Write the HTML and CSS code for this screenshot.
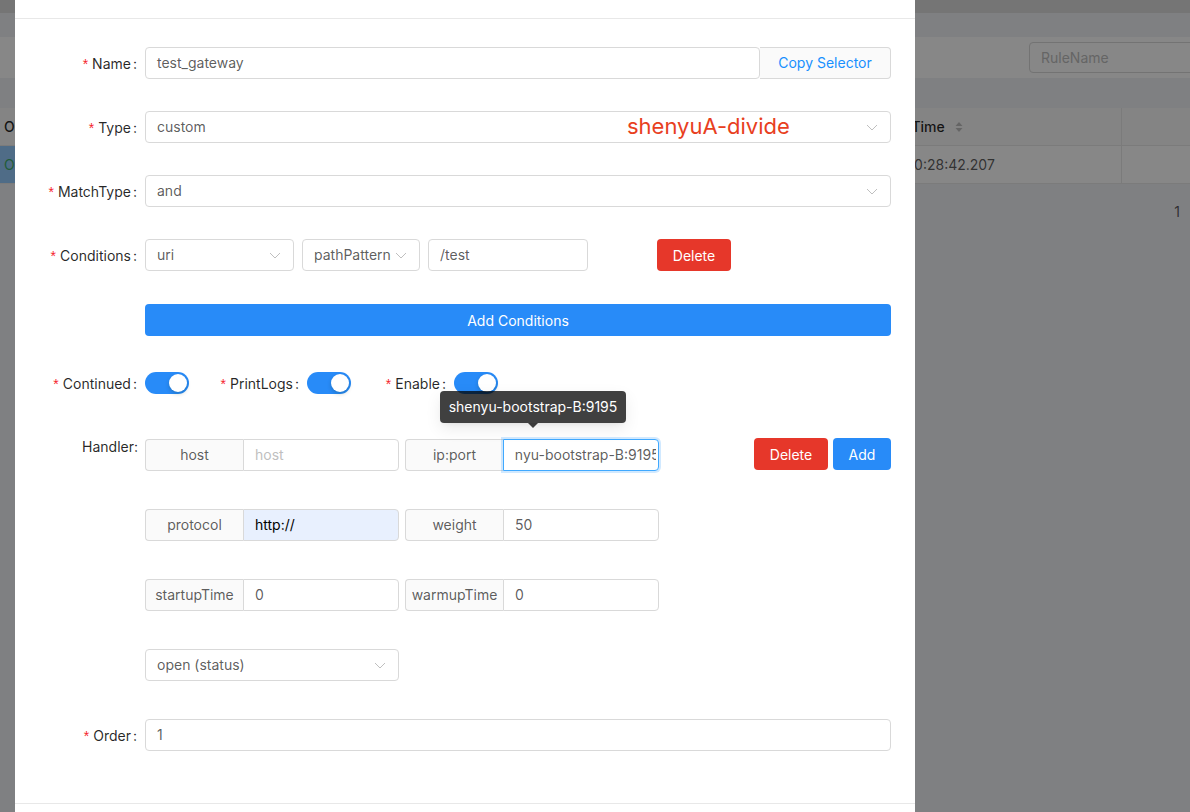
FILE: index.html
```html
<!DOCTYPE html>
<html>
<head>
<meta charset="utf-8">
<link rel="stylesheet" href="styles.css">
</head>
<body>
<div class="page">
  <div class="band-top"></div>
  <div class="band-gap"></div>
  <div class="toolbar"><div class="search">RuleName</div></div>
  <div class="band-gap2"></div>
  <div class="table">
    <div class="tr th">
      <div class="c1">Open</div>
      <div class="c2 th-c2">UpdateTime
        <svg class="sorter" width="8" height="12" viewBox="0 0 8 12"><path d="M4 1 L7.5 5 L0.5 5 Z" fill="#bfbfbf"/><path d="M4 11 L7.5 7 L0.5 7 Z" fill="#bfbfbf"/></svg>
      </div>
      <div class="c3"></div>
    </div>
    <div class="tr td">
      <div class="c1 sel"><span class="green">Open</span></div>
      <div class="c2 td-c2">2021-06-18 00:28:42.207</div>
      <div class="c3"></div>
    </div>
  </div>
  <div class="pager">1</div>
</div>

<div class="mask"></div>

<div class="modal">
  <div class="modal-head"></div>
  <div class="modal-body">

    <div class="item mb32">
      <label class="lbl"><span class="req">*</span>Name<span class="colon">:</span></label>
      <div class="ctrl group">
        <div class="input grow">test_gateway</div>
        <div class="addon addon-copy">Copy Selector</div>
      </div>
    </div>

    <div class="item mb32">
      <label class="lbl"><span class="req">*</span>Type<span class="colon">:</span></label>
      <div class="ctrl">
        <div class="select grow">
          <span>custom</span>
          <svg class="arrow" width="12" height="12" viewBox="0 0 12 12"><path d="M1 4 L6 9 L11 4" fill="none" stroke="#bfbfbf" stroke-width="1"/></svg>
          <span class="note">shenyuA-divide</span>
        </div>
      </div>
    </div>

    <div class="item mb32">
      <label class="lbl"><span class="req">*</span>MatchType<span class="colon">:</span></label>
      <div class="ctrl">
        <div class="select grow">
          <span>and</span>
          <svg class="arrow" width="12" height="12" viewBox="0 0 12 12"><path d="M1 4 L6 9 L11 4" fill="none" stroke="#bfbfbf" stroke-width="1"/></svg>
        </div>
      </div>
    </div>

    <div class="item mb33">
      <label class="lbl"><span class="req">*</span>Conditions<span class="colon">:</span></label>
      <div class="ctrl conds">
        <div class="select w149">
          <span>uri</span>
          <svg class="arrow" width="12" height="12" viewBox="0 0 12 12"><path d="M1 4 L6 9 L11 4" fill="none" stroke="#bfbfbf" stroke-width="1"/></svg>
        </div>
        <div class="select w118">
          <span>pathPattern</span>
          <svg class="arrow" width="12" height="12" viewBox="0 0 12 12"><path d="M1 4 L6 9 L11 4" fill="none" stroke="#bfbfbf" stroke-width="1"/></svg>
        </div>
        <div class="input w160">/test</div>
        <button class="btn danger cond-del">Delete</button>
      </div>
    </div>

    <div class="item mb31">
      <div class="lbl"></div>
      <div class="ctrl">
        <button class="btn primary full">Add Conditions</button>
      </div>
    </div>

    <div class="item mb40">
      <label class="lbl"><span class="req">*</span>Continued<span class="colon">:</span></label>
      <div class="switch"><span class="knob"></span></div>
      <label class="lbl lbl-print"><span class="req">*</span>PrintLogs<span class="colon">:</span></label>
      <div class="switch"><span class="knob"></span></div>
      <label class="lbl lbl-enable"><span class="req">*</span>Enable<span class="colon">:</span></label>
      <div class="switch"><span class="knob"></span></div>
    </div>

    <div class="item item-top mb38">
      <label class="lbl lbl-handler">Handler:</label>
      <div class="ctrl handler">
        <div class="hrow">
          <div class="group w254">
            <div class="addon w98">host</div>
            <div class="input grow placeholder">host</div>
          </div>
          <div class="group w254">
            <div class="addon w98">ip:port</div>
            <div class="input grow focused">
              <div class="clip"><span class="scrolled">shenyu-bootstrap-B:9195</span></div>
              <div class="tooltip">shenyu-bootstrap-B:9195<span class="tip-arrow"></span></div>
            </div>
          </div>
          <div class="hbtns">
            <button class="btn danger w74">Delete</button>
            <button class="btn primary w58">Add</button>
          </div>
        </div>
        <div class="hrow">
          <div class="group w254">
            <div class="addon w98">protocol</div>
            <div class="input grow autofill">http://</div>
          </div>
          <div class="group w254">
            <div class="addon w98">weight</div>
            <div class="input grow">50</div>
          </div>
        </div>
        <div class="hrow">
          <div class="group w254">
            <div class="addon w98">startupTime</div>
            <div class="input grow">0</div>
          </div>
          <div class="group w254">
            <div class="addon w98">warmupTime</div>
            <div class="input grow">0</div>
          </div>
        </div>
        <div class="hrow">
          <div class="select w254">
            <span>open (status)</span>
            <svg class="arrow" width="12" height="12" viewBox="0 0 12 12"><path d="M1 4 L6 9 L11 4" fill="none" stroke="#bfbfbf" stroke-width="1"/></svg>
          </div>
        </div>
      </div>
    </div>

    <div class="item">
      <label class="lbl"><span class="req">*</span>Order<span class="colon">:</span></label>
      <div class="ctrl">
        <div class="input grow">1</div>
      </div>
    </div>

  </div>
  <div class="modal-foot"></div>
</div>
</body>
</html>
```

FILE: styles.css
```css
* { box-sizing: border-box; margin: 0; padding: 0; }

body {
  width: 1190px;
  height: 812px;
  overflow: hidden;
  position: relative;
  background: #f0f2f5;
  font-family: Inter, "Noto Sans", "Liberation Sans", sans-serif;
  font-size: 14px;
  color: rgba(0, 0, 0, 0.65);
}

/* ---------- background page ---------- */
.band-top { height: 13px; background: #dedede; }
.band-gap { height: 24px; background: #f0f2f5; }
.toolbar {
  height: 41px;
  background: #fff;
  display: flex;
  align-items: flex-start;
  padding-top: 5px;
}
.search {
  margin-left: auto;
  margin-right: -20px;
  width: 181px;
  height: 31px;
  border: 1px solid #d9d9d9;
  border-radius: 4px;
  padding: 0 11px;
  line-height: 29px;
  color: #bfbfbf;
}
.band-gap2 { height: 30px; background: #f0f2f5; }
.table { background: #fff; }
.tr { display: flex; height: 38px; border-bottom: 1px solid #e8e8e8; }
.th { background: #fafafa; color: rgba(0, 0, 0, 0.85); font-weight: 500; }
.c1 { width: 820px; padding-left: 4px; line-height: 37px; }
.c2 { width: 302px; border-right: 1px solid #e8e8e8; line-height: 37px; white-space: nowrap; overflow: hidden; }
.c3 { flex: 1; }
.th-c2 { padding-left: 44px; display: flex; align-items: center; gap: 10px; }
.td-c2 { padding-left: 5px; }
.sel { background: #96cdff; }
.green { color: #3fae6a; }
.pager { text-align: right; padding: 18px 10px 0 0; line-height: 20px; }

.mask {
  position: fixed;
  inset: 0;
  background: rgba(0, 0, 0, 0.47);
}

/* ---------- modal ---------- */
.modal {
  position: absolute;
  left: 15px;
  top: 0;
  width: 900px;
  height: 860px;
  background: #fff;
}
.modal-head { height: 19px; border-bottom: 1px solid #e8e8e8; }
.modal-body { padding: 28px 24px 52px; }
.modal-foot { border-top: 1px solid #e8e8e8; height: 57px; }

.item { display: flex; align-items: center; min-height: 32px; }
.item-top { align-items: flex-start; }
.mb31 { margin-bottom: 31px; }
.mb32 { margin-bottom: 32px; }
.mb33 { margin-bottom: 33px; }
.mb38 { margin-bottom: 38px; }
.mb40 { margin-bottom: 40px; }

.lbl {
  width: 106px;
  flex: none;
  padding-right: 8px;
  text-align: right;
  color: rgba(0, 0, 0, 0.85);
  white-space: nowrap;
}
.lbl-print { width: 118px; }
.lbl-enable { width: 103px; }
.lbl-handler { line-height: 14px; padding-top: 1px; padding-right: 7px; }
.req { color: #f5222d; margin-right: 4px; font-family: "Liberation Sans", sans-serif; }
.colon { margin-left: 2px; }

.ctrl { flex: 1; display: flex; min-width: 0; }
.grow { flex: 1; min-width: 0; }
.w58 { width: 58px; }
.w74 { width: 74px; }
.w98 { width: 98px; flex: none; }
.w118 { width: 118px; flex: none; }
.w149 { width: 149px; flex: none; }
.w160 { width: 160px; flex: none; }
.w254 { width: 254px; flex: none; }

.input, .select {
  position: relative;
  height: 32px;
  border: 1px solid #d9d9d9;
  border-radius: 4px;
  padding: 0 11px;
  line-height: 30px;
  background: #fff;
  color: rgba(0, 0, 0, 0.65);
  white-space: nowrap;
}
.select { display: flex; align-items: center; }
.select .arrow { position: absolute; right: 12px; top: 9px; }
.placeholder { color: #bfbfbf; }
.autofill { background: #e8f0fe; color: #000; }
.focused {
  border-color: #40a9ff;
  box-shadow: 0 0 0 2px rgba(24, 144, 255, 0.2);
  padding-right: 2px;
}
.clip { overflow: hidden; }
.scrolled { display: inline-block; margin-left: -24px; }

.note {
  position: absolute;
  left: 481px;
  top: 50%;
  transform: translateY(-55%);
  color: #e8401e;
  font-size: 22px;
  line-height: 1;
}

.group { display: flex; }
.group .addon {
  border-radius: 4px 0 0 4px;
  border-right: 0;
}
.group .addon + .input { border-radius: 0 4px 4px 0; }
.group .input + .addon {
  border-radius: 0 4px 4px 0;
  border-left: 0;
  border-right: 1px solid #d9d9d9;
}
.addon {
  height: 32px;
  border: 1px solid #d9d9d9;
  background: #fafafa;
  text-align: center;
  line-height: 30px;
  color: rgba(0, 0, 0, 0.65);
  white-space: nowrap;
}
.addon-copy { width: 131px; color: #1890ff; }

.conds { gap: 8px; }
.cond-del { width: 74px; margin-left: 61px; }

.btn {
  height: 32px;
  border: 0;
  border-radius: 4px;
  font-family: inherit;
  font-size: 14px;
  color: #fff;
  text-align: center;
}
.danger { background: #e6372a; }
.primary { background: #288bf8; }
.full { width: 100%; }

.switch {
  position: relative;
  width: 44px;
  height: 22px;
  border-radius: 11px;
  background: #288bf8;
  flex: none;
}
.knob {
  position: absolute;
  right: 2px;
  top: 2px;
  width: 18px;
  height: 18px;
  border-radius: 50%;
  background: #fff;
  box-shadow: 0 2px 4px rgba(0, 35, 11, 0.2);
}

.handler { flex-direction: column; gap: 38px; }
.hrow { display: flex; gap: 6px; }
.hbtns { margin-left: auto; display: flex; gap: 5px; margin-top: -1px; }

.tooltip {
  position: absolute;
  left: -64px;
  top: -49px;
  width: 186px;
  height: 32px;
  padding: 0 8px;
  line-height: 32px;
  background: rgba(0, 0, 0, 0.75);
  color: #fff;
  border-radius: 4px;
  text-align: center;
  box-shadow: 0 3px 6px -4px rgba(0, 0, 0, 0.12), 0 6px 16px rgba(0, 0, 0, 0.08);
  z-index: 2;
}
.tip-arrow {
  position: absolute;
  left: 88px;
  bottom: -5px;
  width: 0;
  height: 0;
  border-left: 5px solid transparent;
  border-right: 5px solid transparent;
  border-top: 5px solid rgba(0, 0, 0, 0.75);
}
```
